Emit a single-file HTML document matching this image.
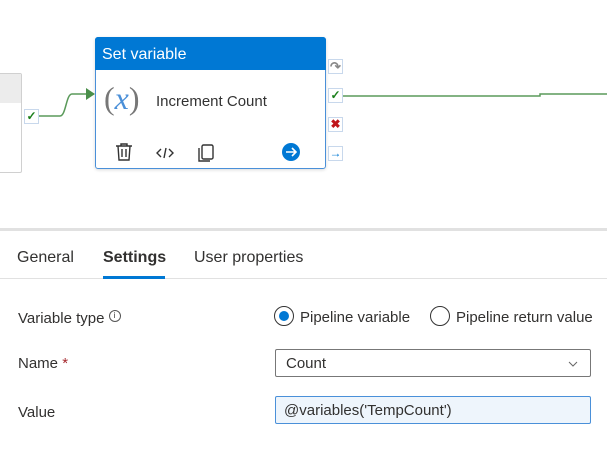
<html><head><style>
body{margin:0;width:607px;height:469px;background:#fff;font-family:"Liberation Sans",sans-serif;position:relative;overflow:hidden;color:#323130}
.a{position:absolute}
.sb{position:absolute;left:328px;width:15px;height:15px;border:1px solid #c8d8ec;background:#fff;box-sizing:border-box;font-size:12px;line-height:13px;text-align:center;font-weight:bold}
</style></head><body>
<div class="a" style="left:-2px;top:73px;width:24px;height:100px;border:1px solid #d0d0d0;border-radius:2px;box-sizing:border-box"></div>
<div class="a" style="left:0;top:74px;width:21px;height:29px;background:#ececec"></div>
<div class="a sb" style="left:24px;top:109px;color:#1a7f1a">✓</div>
<svg class="a" style="left:0;top:0" width="607" height="200">
<path d="M39 116 H60 C66 116 66 94 72 94 H88" stroke="#5a9a5a" stroke-width="1.5" fill="none"/>
<path d="M86 88 L95 94 L86 100 Z" fill="#4a8f4a"/>
<path d="M343 96 H540 V94 H607" stroke="#5a9a5a" stroke-width="1.5" fill="none"/>
</svg>
<div class="a" style="left:95px;top:37px;width:231px;height:132px;border:1px solid #4a90d9;border-radius:3px;box-sizing:border-box;box-shadow:0 1px 3px rgba(0,0,0,.15)"></div>
<div class="a" style="left:95px;top:37px;width:231px;height:33px;background:#0078d4;border-radius:3px 3px 0 0;color:#fff;font-size:16px;line-height:35px;padding-left:7px;box-sizing:border-box">Set variable</div>
<div class="a" style="left:104px;top:80px;font-family:'Liberation Serif',serif;font-size:32px;color:#777">(<i style="color:#4a8fd8">x</i>)</div>
<div class="a" style="left:156px;top:93px;font-size:15px;color:#333">Increment Count</div>
<svg class="a" style="left:113px;top:142px" width="200" height="22">
<g stroke="#333" stroke-width="1.4" fill="none"><path d="M3 4 H19 M8 4 V2 H14 V4 M5 4 L6 18 H16 L17 4 M9 7 V15 M13 7 V15"/>
<path d="M48 7 L44 11 L48 15 M56 7 L60 11 L56 15 M53 6 L51 16"/>
<rect x="89" y="3" width="11" height="14" rx="1.5"/><path d="M86 6 V19 H97"/></g>
<circle cx="178" cy="10" r="9" fill="#0078d4"/><path d="M173 10 H182 M179 6 L183 10 L179 14" stroke="#fff" stroke-width="1.6" fill="none"/>
</svg>
<div class="sb" style="top:59px;color:#888;font-size:13px">↷</div>
<div class="sb" style="top:88px;color:#1a7f1a">✓</div>
<div class="sb" style="top:117px;color:#c0161b">✖</div>
<div class="sb" style="top:146px;color:#0078d4">→</div>
<div class="a" style="left:0;top:228px;width:607px;height:3px;background:#e1e1e1"></div>
<div class="a" style="left:17px;top:249px;font-size:16px">General</div>
<div class="a" style="left:103px;top:249px;font-size:16px;font-weight:bold">Settings</div>
<div class="a" style="left:194px;top:249px;font-size:16px">User properties</div>
<div class="a" style="left:0;top:278px;width:607px;height:1px;background:#e1e1e1"></div>
<div class="a" style="left:103px;top:276px;width:62px;height:3px;background:#0078d4"></div>
<div class="a" style="left:18px;top:310px;font-size:15px">Variable type <span style="vertical-align:top;border:1px solid #555;border-radius:50%;display:inline-block;width:10px;height:10px;line-height:10px;text-align:center;font-size:8px">i</span></div>
<div class="a" style="left:274px;top:306px;width:20px;height:20px;border:1px solid #333;border-radius:50%;box-sizing:border-box"><div style="margin:4px;width:10px;height:10px;border-radius:50%;background:#0078d4"></div></div>
<div class="a" style="left:300px;top:309px;font-size:15px">Pipeline variable</div>
<div class="a" style="left:430px;top:306px;width:20px;height:20px;border:1px solid #333;border-radius:50%;box-sizing:border-box"></div>
<div class="a" style="left:456px;top:309px;font-size:15px">Pipeline return value</div>
<div class="a" style="left:18px;top:355px;font-size:15px">Name <span style="color:#a4262c">*</span></div>
<div class="a" style="left:275px;top:349px;width:316px;height:28px;border:1px solid #777;border-radius:2px;box-sizing:border-box;font-size:15px;line-height:28px;padding-left:10px">Count<svg style="position:absolute;right:12px;top:11px" width="10" height="6"><path d="M1 1 L5 5 L9 1" stroke="#666" fill="none"/></svg></div>
<div class="a" style="left:18px;top:404px;font-size:15px">Value</div>
<div class="a" style="left:275px;top:396px;width:316px;height:28px;border:1px solid #4a90d9;background:#eef5fc;border-radius:2px;box-sizing:border-box;font-size:15px;line-height:28px;padding-left:8px">@variables('TempCount')</div>
</body></html>
